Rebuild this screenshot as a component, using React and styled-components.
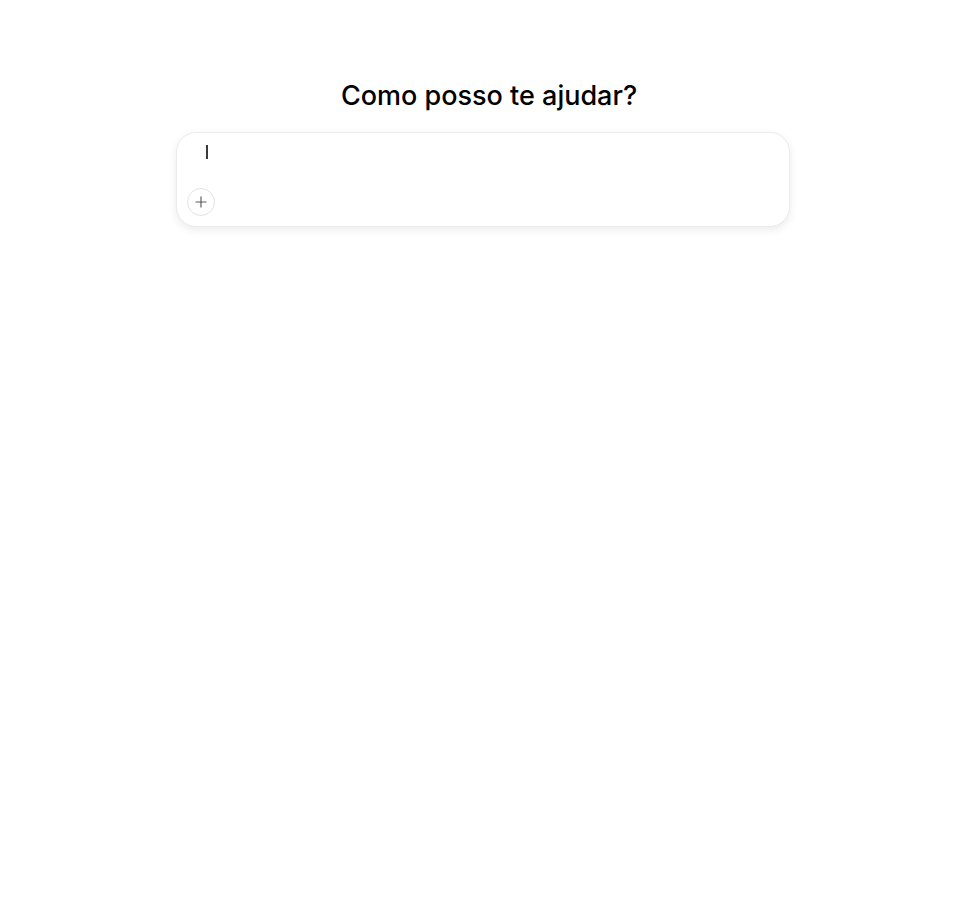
import React from 'react';
import styled, { createGlobalStyle } from 'styled-components';

const GlobalStyle = createGlobalStyle`
    html, body {
        margin: 0;
        background: #ffffff;
        font-family: Inter, "Liberation Sans", Arial, sans-serif;
        color: #0d0d0d;
    }
`;

const Page = styled.main`
    min-height: 900px;
    padding: 76px 170px 0 176px;
    box-sizing: border-box;
    display: flex;
    flex-direction: column;
    align-items: stretch;
`;

const Title = styled.h1`
    margin: 0 0 16px 12px;
    font-size: 27px;
    font-weight: 500;
    line-height: 40px;
    text-align: center;
    color: #000;
`;

const Composer = styled.div`
    height: 95px;
    box-sizing: border-box;
    border: 1px solid #ebebeb;
    border-radius: 20px;
    box-shadow: 0 3px 8px rgba(0, 0, 0, 0.08);
    background: #fff;
    padding: 11px 10px 10px 10px;
    display: flex;
    flex-direction: column;
    justify-content: space-between;
`;

const InputLine = styled.div`
    padding-left: 19px;
    height: 16px;
    display: flex;
    align-items: center;
`;

const Caret = styled.span`
    display: block;
    width: 1.5px;
    height: 14px;
    background: #3a3a3a;
`;

const Toolbar = styled.div`
    display: flex;
    align-items: center;
`;

const RoundButton = styled.button`
    width: 28px;
    height: 28px;
    border-radius: 50%;
    border: 1px solid #e3e3e3;
    background: #fff;
    padding: 0;
    display: flex;
    align-items: center;
    justify-content: center;
    color: #5d5d5d;
    cursor: pointer;
`;

const PlusIcon = () => (
    <svg width="12" height="12" viewBox="0 0 12 12" fill="none">
        <path d="M6 0.5V11.5M0.5 6H11.5" stroke="currentColor" strokeWidth="1.2" />
    </svg>
);

export default function App() {
    return (
        <>
            <GlobalStyle />
            <Page>
                <Title>Como posso te ajudar?</Title>
                <Composer>
                    <InputLine>
                        <Caret />
                    </InputLine>
                    <Toolbar>
                        <RoundButton aria-label="Adicionar">
                            <PlusIcon />
                        </RoundButton>
                    </Toolbar>
                </Composer>
            </Page>
        </>
    );
}
